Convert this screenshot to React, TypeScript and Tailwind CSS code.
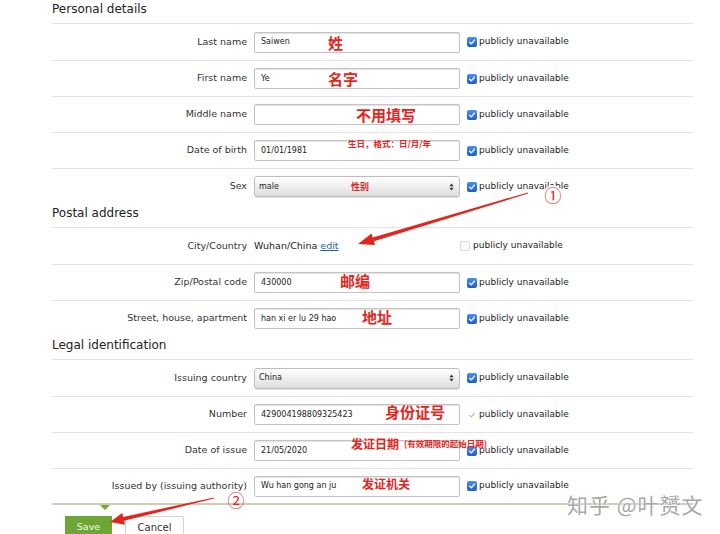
import React from "react";

function Check() {
  return (
    <span className="flex h-[10px] w-[10px] items-center justify-center rounded-[2px] bg-linear-to-b from-[#4b8ef2] to-[#1d5ccf]">
      <svg viewBox="0 0 10 10" className="h-[8px] w-[8px]">
        <path d="M2 5.2 L4.2 7.3 L8 2.6" fill="none" stroke="#fff" strokeWidth="1.7" strokeLinecap="round" strokeLinejoin="round" />
      </svg>
    </span>
  );
}

function Pub({ kind = "on" }: { kind?: "on" | "off" | "grey" }) {
  return (
    <div className={`flex items-center gap-[2px] text-[9px] text-[#222] ${kind === "off" ? "ml-[0px]" : "ml-[7px]"}`}>
      {kind === "on" && <Check />}
      {kind === "off" && <span className="mr-[1px] h-[10px] w-[10px] rounded-[2px] border border-[#dadada] bg-[#fbfbfb]" />}
      {kind === "grey" && (
        <span className="flex h-[10px] w-[10px] items-center justify-center">
          <svg viewBox="0 0 10 10" className="h-[8px] w-[8px]">
            <path d="M2 5.4 L4.2 7.4 L8 2.6" fill="none" stroke="#b9b9b9" strokeWidth="1.3" strokeLinecap="round" strokeLinejoin="round" />
          </svg>
        </span>
      )}
      <span>publicly unavailable</span>
    </div>
  );
}

function Input({ value = "" }: { value?: string }) {
  return (
    <div className="flex h-[21px] items-center rounded-[2px] border border-[#c4c4c4] bg-white pl-[6px] text-[8px] text-[#222] shadow-[inset_0_1px_1px_rgba(0,0,0,0.12)]">
      {value}
    </div>
  );
}

function Select({ value }: { value: string }) {
  return (
    <div className="flex h-[21px] items-center justify-between rounded-[3px] border border-[#bdbdbd] bg-linear-to-b from-[#fefefe] via-[#efefef] to-[#dcdcdc] pl-[4px] pr-[5px] text-[8px] text-[#222] shadow-[0_1px_1px_rgba(0,0,0,0.12)]">
      <span>{value}</span>
      <svg width="5" height="8" viewBox="0 0 5 8">
        <path d="M2.5 0.5 L4.6 3.2 H0.4Z M2.5 7.5 L4.6 4.8 H0.4Z" fill="#333" />
      </svg>
    </div>
  );
}

function Heading({ children }: { children: React.ReactNode }) {
  return (
    <div className="h-[24px] border-b border-[#e3e3e3] pt-[1px] text-[12px] leading-[17px] text-[#222]">{children}</div>
  );
}

function Row({
  label,
  children,
  pub,
  first,
  h = "h-[36px]",
}: {
  label: string;
  children: React.ReactNode;
  pub: React.ReactNode;
  first?: boolean;
  h?: string;
}) {
  return (
    <div className={`flex ${h} items-center ${first ? "" : "border-t border-[#e3e3e3]"}`}>
      <div className="w-[195px] text-right text-[9.5px] text-[#333]">{label}</div>
      <div className="ml-[7px] w-[206px]">{children}</div>
      {pub}
    </div>
  );
}

export default function App() {
  const red = "absolute font-['Noto_Sans_CJK_SC',sans-serif] font-bold leading-none text-[#e3261d]";
  return (
    <div className="relative h-[534px] w-[720px] overflow-hidden bg-white font-['DejaVu_Sans',sans-serif]">
      <div className="ml-[52px] w-[641px]">
        <Heading>Personal details</Heading>
        <Row first label="Last name" pub={<Pub />}>
          <Input value="Saiwen" />
        </Row>
        <Row label="First name" pub={<Pub />}>
          <Input value="Ye" />
        </Row>
        <Row label="Middle name" pub={<Pub />}>
          <Input />
        </Row>
        <Row label="Date of birth" pub={<Pub />}>
          <Input value="01/01/1981" />
        </Row>
        <Row label="Sex" pub={<Pub />}>
          <Select value="male" />
        </Row>

        <Heading>Postal address</Heading>
        <Row first label="City/Country" pub={<Pub kind="off" />}>
          <div className="text-[9.5px] text-[#222]">
            Wuhan/China <span className="text-[#2463ab] underline">edit</span>
          </div>
        </Row>
        <Row label="Zip/Postal code" pub={<Pub />}>
          <Input value="430000" />
        </Row>
        <Row label="Street, house, apartment" pub={<Pub />}>
          <Input value="han xi er lu 29 hao" />
        </Row>

        <Heading>Legal identification</Heading>
        <Row first label="Issuing country" pub={<Pub />}>
          <Select value="China" />
        </Row>
        <Row label="Number" pub={<Pub kind="grey" />}>
          <Input value="429004198809325423" />
        </Row>
        <Row label="Date of issue" pub={<Pub />}>
          <Input value="21/05/2020" />
        </Row>
        <Row label="Issued by (issuing authority)" pub={<Pub />} h="h-[35px]">
          <Input value="Wu han gong an ju" />
        </Row>
        <div className="relative h-[2px] bg-[#cbceb4]">
          <span className="absolute left-[48px] top-[2px] h-0 w-0 border-x-[5px] border-t-[5px] border-x-transparent border-t-[#7aa83d]" />
        </div>
      </div>

      <div className="ml-[65px] mt-[11px] flex gap-[13px]">
        <div className="flex h-[22px] w-[47px] items-center justify-center bg-[#6ea635] text-[9.5px] text-[#f4f9ee]">Save</div>
        <div className="flex h-[22px] w-[59px] items-center justify-center rounded-t-[2px] border border-[#d4d4d4] bg-white text-[10px] text-[#333]">
          Cancel
        </div>
      </div>

      {/* red annotations */}
      <span className={`${red} left-[328px] top-[35px] text-[15px]`}>姓</span>
      <span className={`${red} left-[328px] top-[71px] text-[15px]`}>名字</span>
      <span className={`${red} left-[356px] top-[107px] text-[15px]`}>不用填写</span>
      <span className={`${red} left-[348px] top-[139px] text-[8.5px]`}>生日，格式：日/月/年</span>
      <span className={`${red} left-[351px] top-[182px] text-[9px]`}>性别</span>
      <span className={`${red} left-[340px] top-[273px] text-[15px]`}>邮编</span>
      <span className={`${red} left-[362px] top-[309px] text-[15px]`}>地址</span>
      <span className={`${red} left-[385px] top-[404px] text-[15px]`}>身份证号</span>
      <span className={`${red} left-[351px] top-[438px] text-[12px]`}>发证日期</span>
      <span className={`${red} left-[404px] top-[439px] text-[8.5px]`}>(有效期限的起始日期)</span>
      <span className={`${red} left-[362px] top-[478px] text-[12px]`}>发证机关</span>

      <span className="absolute left-[544px] top-[185px] flex h-[18px] w-[18px] items-center justify-center rounded-full bg-white font-['Noto_Sans_CJK_SC',sans-serif] text-[17px] leading-none text-[#e3261d]">
        ①
      </span>
      <span className="absolute left-[227px] top-[491px] flex h-[17px] w-[18px] items-center justify-center font-['Noto_Sans_CJK_SC',sans-serif] text-[17px] leading-none text-[#e3261d]">
        ②
      </span>

      <svg className="pointer-events-none absolute left-0 top-0" width="720" height="534" viewBox="0 0 720 534">
        <polygon
          points="527.9,192.4 372.7,237.5 371.6,233.6 358,244 375.0,245.1 373.9,241.3 528.1,193.6"
          fill="#e3261d"
        />
        <polygon
          points="214.1,497.4 123.2,516.9 122.3,513.0 110,522 125.0,524.7 124.1,520.8 213.9,498.6"
          fill="#e3261d"
        />
      </svg>

      <span className="absolute left-[567px] top-[494px] font-['Noto_Sans_CJK_SC',sans-serif] text-[21px] leading-none tracking-[1px] text-[#a8a8a8] [text-shadow:0_0_2px_#fff,0_0_2px_#fff]">
        知乎 @叶赟文
      </span>
    </div>
  );
}
